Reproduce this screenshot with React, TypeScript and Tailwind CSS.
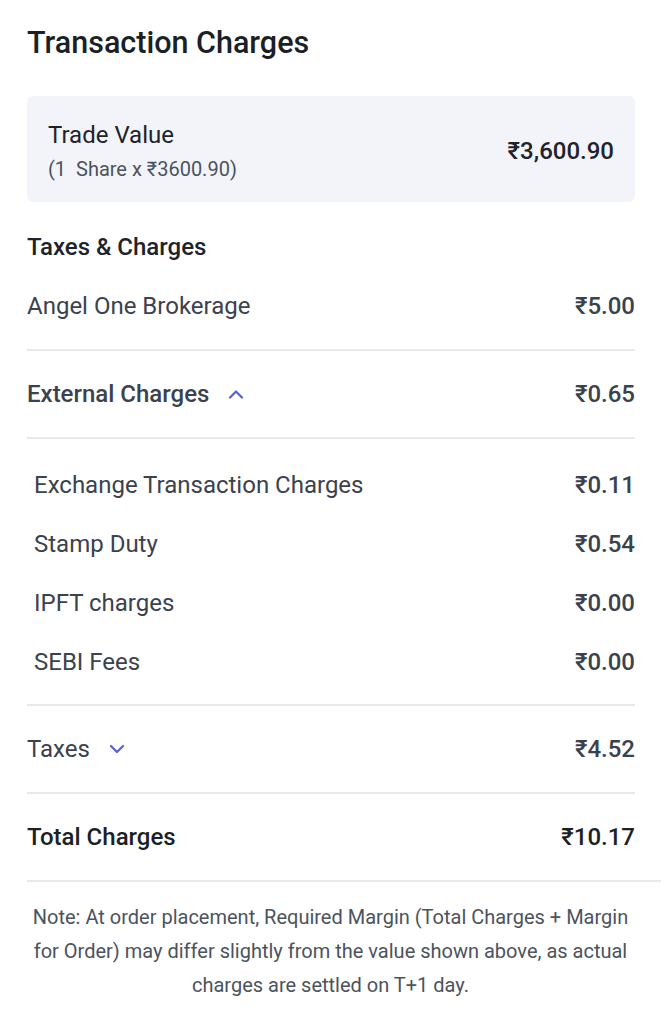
import React from 'react';

function Chevron({ up }: { up?: boolean }) {
  return (
    <svg width="16" height="10" viewBox="0 0 16 10" className="ml-[19px]">
      <path
        d={up ? 'M2 8.5 L8 2.5 L14 8.5' : 'M2 2 L8 8 L14 2'}
        fill="none"
        stroke="#5660d8"
        strokeWidth="2.2"
        strokeLinecap="round"
        strokeLinejoin="round"
      />
    </svg>
  );
}

const external = [
  { label: 'Exchange Transaction Charges', value: '₹0.11' },
  { label: 'Stamp Duty', value: '₹0.54' },
  { label: 'IPFT charges', value: '₹0.00' },
  { label: 'SEBI Fees', value: '₹0.00' },
];

export default function App() {
  return (
    <div className="w-[661px] min-h-[1024px] bg-white font-['Roboto',sans-serif]">
      <div className="pl-[27px] pr-[26px]">
        <h1 className="pt-[24px] text-[30.5px] leading-[38px] font-medium text-[#1b1f26]">
          Transaction Charges
        </h1>

        <div className="mt-[34px] h-[106px] rounded-md bg-[#f3f4f9] pl-[21px] pr-[21px] flex items-center justify-between">
          <div className="flex flex-col pt-[2px]">
            <span className="text-[24px] leading-[30px] text-[#1e232b]">Trade Value</span>
            <span className="mt-[7px] text-[20px] leading-[24px] text-[#4c535e]">(1&nbsp; Share x ₹3600.90)</span>
          </div>
          <span className="pt-[3px] text-[24px] font-medium text-[#1e232b]">₹3,600.90</span>
        </div>

        <h2 className="mt-[30px] text-[24px] leading-[30px] font-medium text-[#1e232b]">Taxes &amp; Charges</h2>

        <div className="h-[87px] flex items-center justify-between text-[24px] leading-[30px] text-[#3b424d]">
          <span>Angel One Brokerage</span>
          <span className="font-medium">₹5.00</span>
        </div>

        <div className="h-[88px] border-t-2 border-[#e8e9ec] flex items-center justify-between text-[24px] text-[#3b424d]">
          <span className="flex items-center font-medium">
            External Charges
            <Chevron up />
          </span>
          <span className="font-medium">₹0.65</span>
        </div>

        <div className="border-t-2 border-[#e8e9ec] pt-[16px] pb-[13px]">
          {external.map((item) => (
            <div
              key={item.label}
              className="h-[59px] pl-[7px] flex items-center justify-between text-[24px] text-[#3b424d]"
            >
              <span>{item.label}</span>
              <span className="font-medium">{item.value}</span>
            </div>
          ))}
        </div>

        <div className="h-[88px] border-t-2 border-[#e8e9ec] flex items-center justify-between text-[24px] text-[#3b424d]">
          <span className="flex items-center">
            Taxes
            <Chevron />
          </span>
          <span className="font-medium">₹4.52</span>
        </div>

        <div className="h-[88px] border-t-2 border-[#e8e9ec] flex items-center justify-between text-[24px] font-medium text-[#1b1f26]">
          <span>Total Charges</span>
          <span>₹10.17</span>
        </div>
      </div>

      <div className="ml-[27px] border-t-2 border-[#e8e9ec]" />

      <p className="px-[28px] pt-[18px] text-center text-[20px] leading-[34px] text-[#4c535e]">
        Note: At order placement, Required Margin (Total Charges + Margin for Order) may differ slightly from the value shown above, as actual charges are settled on T+1 day.
      </p>
    </div>
  );
}
